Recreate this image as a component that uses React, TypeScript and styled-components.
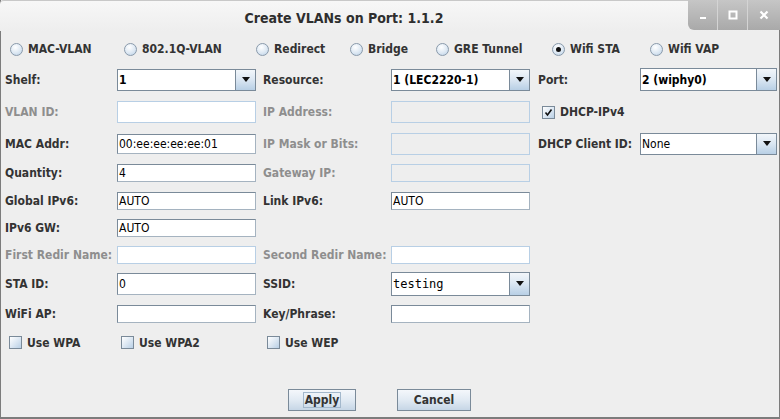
import React from "react";
import styled, { createGlobalStyle } from "styled-components";

const GlobalStyle = createGlobalStyle`
  html, body { margin: 0; padding: 0; background: #eeeeee; }
  * { box-sizing: border-box; }
`;

const UI_FONT = `"DejaVu Sans Condensed", "DejaVu Sans", sans-serif`;

const Window = styled.div`
  width: 780px;
  height: 419px;
  display: flex;
  flex-direction: column;
  background: #eeeeee;
  border-left: 1px solid #7c7c7c;
  border-right: 1px solid #7c7c7c;
  border-bottom: 2px solid #7c7c7c;
  font-family: ${UI_FONT};
  font-stretch: condensed;
  color: #333333;
`;

const TitleBar = styled.div`
  height: 31px;
  display: flex;
  align-items: flex-start;
  background: linear-gradient(#f7f7f7, #eeeeee);
  border-top: 1px solid #c8c8c8;
  border-top-left-radius: 4px;
  margin-left: -1px;
`;

const Title = styled.div`
  flex: 1;
  text-align: center;
  font-size: 14px;
  font-weight: bold;
  line-height: 34px;
  color: #2e2e2e;
`;

const WinControls = styled.div`
  display: flex;
  height: 30px;
  margin-top: -1px;
  margin-right: -1px;
  border-bottom-left-radius: 6px;
  overflow: hidden;
  background: linear-gradient(#c6c6c6, #a9a9a9);
`;

const WinButton = styled.div<{ $w: number; $last?: boolean }>`
  width: ${(p) => p.$w}px;
  display: flex;
  align-items: center;
  justify-content: center;
  border-right: ${(p) => (p.$last ? "none" : "1px solid #d4d4d4")};
`;

const RadioRow = styled.div`
  display: grid;
  grid-template-columns: 114px 132px 94px 86px 116px 98px auto;
  padding-left: 9px;
  padding-top: 4px;
  height: 32px;
  align-items: center;
`;

const RadioItem = styled.label`
  display: flex;
  align-items: center;
  gap: 5px;
  font-size: 12px;
  font-weight: bold;
`;

const RadioCircle = styled.span<{ $on?: boolean }>`
  width: 13px;
  height: 13px;
  border-radius: 50%;
  border: 1px solid #8a9aab;
  background: radial-gradient(circle at 40% 30%, #ffffff 0%, #dde8f3 55%, #b8cfe5 100%);
  display: flex;
  align-items: center;
  justify-content: center;
  &::after {
    content: "";
    display: ${(p) => (p.$on ? "block" : "none")};
    width: 5px;
    height: 5px;
    border-radius: 50%;
    background: #111;
  }
`;

const Form = styled.div`
  display: flex;
  flex-direction: column;
  padding-left: 4px;
`;

const Row = styled.div<{ $h: number }>`
  display: grid;
  grid-template-columns: 112px 139px 135px 139px 110px 137px;
  height: ${(p) => p.$h}px;
  align-items: center;
`;

const Label = styled.span<{ $pad?: number; $off?: boolean }>`
  padding-left: ${(p) => p.$pad ?? 0}px;
  font-size: 12px;
  font-weight: bold;
  color: ${(p) => (p.$off ? "#8e8e8e" : "#333333")};
  white-space: nowrap;
`;

const Field = styled.div<{ $h: number; $kind?: "on" | "offWhite" | "offGray" }>`
  height: ${(p) => p.$h}px;
  border: 1px solid ${(p) => (p.$kind && p.$kind !== "on" ? "#b8cfe5" : "#7a8a99")};
  border-right-color: ${(p) => (p.$kind && p.$kind !== "on" ? "#b8cfe5" : "#a5b3c0")};
  border-bottom-color: ${(p) => (p.$kind && p.$kind !== "on" ? "#b8cfe5" : "#a5b3c0")};
  background: ${(p) => (p.$kind === "offGray" ? "#eeeeee" : "#ffffff")};
  padding-left: 1px;
  display: flex;
  align-items: center;
  font-size: 12px;
  color: #000;
  white-space: nowrap;
  overflow: hidden;
`;

const Combo = styled.div<{ $h: number }>`
  height: ${(p) => p.$h}px;
  display: flex;
  border: 1px solid #7a8a99;
  background: #ffffff;
`;

const ComboValue = styled.div<{ $bold?: boolean; $mono?: boolean }>`
  flex: 1;
  display: flex;
  align-items: center;
  padding-left: 1px;
  font-size: 12px;
  font-weight: ${(p) => (p.$bold ? "bold" : "normal")};
  font-family: ${(p) => (p.$mono ? `"DejaVu Sans Mono", monospace` : UI_FONT)};
  color: #000;
  white-space: nowrap;
  overflow: hidden;
`;

const ComboArrow = styled.div`
  width: 20px;
  border-left: 1px solid #7a8a99;
  background: linear-gradient(#f2f6fa, #dde8f3 45%, #b8cfe5);
  display: flex;
  align-items: center;
  justify-content: center;
  &::after {
    content: "";
    border-left: 4px solid transparent;
    border-right: 4px solid transparent;
    border-top: 5px solid #111;
  }
`;

const Check = styled.label<{ $pad: number }>`
  display: flex;
  align-items: center;
  gap: 5px;
  padding-left: ${(p) => p.$pad}px;
  font-size: 12px;
  font-weight: bold;
  white-space: nowrap;
`;

const CheckBox = styled.span`
  width: 13px;
  height: 13px;
  flex: none;
  border: 1px solid #7a8a99;
  background: linear-gradient(135deg, #ffffff, #dde8f3 50%, #b8cfe5);
  display: flex;
  align-items: center;
  justify-content: center;
`;

const ButtonRow = styled.div`
  margin-top: auto;
  display: flex;
  gap: 41px;
  padding-left: 287px;
  padding-bottom: 6px;
`;

const Button = styled.button<{ $w: number }>`
  width: ${(p) => p.$w}px;
  height: 22px;
  padding: 0;
  border: 1px solid #7a8a99;
  background: linear-gradient(#f4f7fb, #e1eaf3 50%, #c6d6e6);
  font-family: ${UI_FONT};
  font-stretch: condensed;
  font-size: 12px;
  font-weight: bold;
  color: #333;
  display: flex;
  align-items: center;
  justify-content: center;
`;

const Focus = styled.span`
  border: 1px solid #a3b8cc;
  padding: 0 1px;
  line-height: 14px;
`;

const Tick = () => (
  <svg width="9" height="9" viewBox="0 0 9 9">
    <path d="M1.5 4.5 L3.5 7 L7.5 1.5" fill="none" stroke="#111" strokeWidth="1.6" />
  </svg>
);

const radios = ["MAC-VLAN", "802.1Q-VLAN", "Redirect", "Bridge", "GRE Tunnel", "Wifi STA", "Wifi VAP"];

export default function App() {
  return (
    <>
      <GlobalStyle />
      <Window>
        <TitleBar>
          <Title>Create VLANs on Port: 1.1.2</Title>
          <WinControls>
            <WinButton $w={30}>
              <svg width="8" height="8" viewBox="0 0 8 8">
                <rect x="1" y="6" width="6" height="2" fill="#fff" />
              </svg>
            </WinButton>
            <WinButton $w={30}>
              <svg width="10" height="10" viewBox="0 0 10 10">
                <rect x="1.5" y="1.5" width="7" height="7" fill="none" stroke="#fff" strokeWidth="2" />
              </svg>
            </WinButton>
            <WinButton $w={32} $last>
              <svg width="10" height="10" viewBox="0 0 10 10">
                <path d="M1.5 1.5 L8.5 8.5 M8.5 1.5 L1.5 8.5" stroke="#fff" strokeWidth="2.2" />
              </svg>
            </WinButton>
          </WinControls>
        </TitleBar>

        <RadioRow>
          {radios.map((r) => (
            <RadioItem key={r}>
              <RadioCircle $on={r === "Wifi STA"} />
              {r}
            </RadioItem>
          ))}
        </RadioRow>

        <Form>
          <Row $h={33}>
            <Label>Shelf:</Label>
            <Combo $h={22}>
              <ComboValue $bold>1</ComboValue>
              <ComboArrow />
            </Combo>
            <Label $pad={7}>Resource:</Label>
            <Combo $h={22}>
              <ComboValue $bold>1 (LEC2220-1)</ComboValue>
              <ComboArrow />
            </Combo>
            <Label $pad={8}>Port:</Label>
            <Combo $h={23}>
              <ComboValue $bold>2 (wiphy0)</ComboValue>
              <ComboArrow />
            </Combo>
          </Row>
          <Row $h={32}>
            <Label $off>VLAN ID:</Label>
            <Field $h={22} $kind="offWhite" />
            <Label $pad={7} $off>IP Address:</Label>
            <Field $h={22} $kind="offGray" />
            <Check $pad={12}>
              <CheckBox>
                <Tick />
              </CheckBox>
              DHCP-IPv4
            </Check>
            <span />
          </Row>
          <Row $h={31}>
            <Label>MAC Addr:</Label>
            <Field $h={20}>00:ee:ee:ee:ee:01</Field>
            <Label $pad={7} $off>IP Mask or Bits:</Label>
            <Field $h={22} $kind="offGray" />
            <Label $pad={8}>DHCP Client ID:</Label>
            <Combo $h={22}>
              <ComboValue>None</ComboValue>
              <ComboArrow />
            </Combo>
          </Row>
          <Row $h={28}>
            <Label>Quantity:</Label>
            <Field $h={18}>4</Field>
            <Label $pad={7} $off>Gateway IP:</Label>
            <Field $h={18} $kind="offGray" />
          </Row>
          <Row $h={27}>
            <Label>Global IPv6:</Label>
            <Field $h={18}>AUTO</Field>
            <Label $pad={7}>Link IPv6:</Label>
            <Field $h={18}>AUTO</Field>
          </Row>
          <Row $h={27}>
            <Label>IPv6 GW:</Label>
            <Field $h={18}>AUTO</Field>
          </Row>
          <Row $h={27}>
            <Label $off>First Redir Name:</Label>
            <Field $h={18} $kind="offWhite" />
            <Label $pad={7} $off>Second Redir Name:</Label>
            <Field $h={18} $kind="offWhite" />
          </Row>
          <Row $h={31}>
            <Label>STA ID:</Label>
            <Field $h={22}>0</Field>
            <Label $pad={7}>SSID:</Label>
            <Combo $h={24}>
              <ComboValue $mono>testing</ComboValue>
              <ComboArrow />
            </Combo>
          </Row>
          <Row $h={29}>
            <Label>WiFi AP:</Label>
            <Field $h={18} />
            <Label $pad={7}>Key/Phrase:</Label>
            <Field $h={18} />
          </Row>
          <Row $h={29}>
            <Check $pad={4}>
              <CheckBox />
              Use WPA
            </Check>
            <Check $pad={4}>
              <CheckBox />
              Use WPA2
            </Check>
            <Check $pad={11}>
              <CheckBox />
              Use WEP
            </Check>
          </Row>
        </Form>

        <ButtonRow>
          <Button $w={68}>
            <Focus>Apply</Focus>
          </Button>
          <Button $w={74}>Cancel</Button>
        </ButtonRow>
      </Window>
    </>
  );
}
